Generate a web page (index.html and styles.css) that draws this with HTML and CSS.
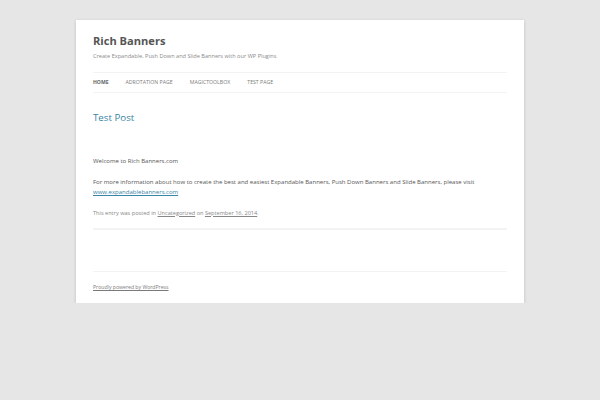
FILE: index.html
```html
<!DOCTYPE html>
<html lang="en">
<head>
<meta charset="utf-8">
<title>Rich Banners</title>
<link rel="stylesheet" href="styles.css">
</head>
<body>
<div class="site">
  <header class="site-header">
    <h1 class="site-title"><a href="#">Rich Banners</a></h1>
    <h2 class="site-description">Create Expandable, Push Down and Slide Banners with our WP Plugins</h2>
    <nav class="main-navigation">
      <ul class="nav-menu">
        <li class="current"><a href="#">Home</a></li>
        <li><a href="#">AdRotation Page</a></li>
        <li><a href="#">MagicToolbox</a></li>
        <li><a href="#">Test Page</a></li>
      </ul>
    </nav>
  </header>
  <main class="site-content">
    <article class="post">
      <header class="entry-header">
        <h1 class="entry-title"><a href="#">Test Post</a></h1>
      </header>
      <div class="entry-content">
        <p>Welcome to Rich Banners.com</p>
        <p>For more information about how to create the best and easiest Expandable Banners, Push Down Banners and Slide Banners, please visit <a href="#">www.expandablebanners.com</a></p>
      </div>
      <footer class="entry-meta">This entry was posted in <a href="#">Uncategorized</a> on <a href="#">September 16, 2014</a>.</footer>
    </article>
  </main>
  <footer class="site-footer">
    <a href="#">Proudly powered by WordPress</a>
  </footer>
</div>
</body>
</html>
```
FILE: styles.css
```css
html, body {
  margin: 0;
  padding: 0;
  background: #e6e6e6;
}
body {
  font-family: "Open Sans", "Liberation Sans", sans-serif;
  color: #555;
}
.site {
  width: 414px;
  margin: 20px auto 0;
  padding: 0 17px;
  background: #fff;
  box-shadow: 0 1px 3px rgba(100, 100, 100, 0.3);
}
.site-header {
  padding-top: 14.4px;
}
.site-title {
  margin: 0;
  font-size: 11.1px;
  line-height: 14px;
  font-weight: 700;
}
.site-title a {
  color: #555;
  text-decoration: none;
}
.site-description {
  margin: 2.9px 0 0;
  font-size: 5.6px;
  line-height: 10.3px;
  font-weight: 400;
  color: #8a8a8a;
}
.main-navigation {
  margin-top: 10.7px;
}
.nav-menu {
  list-style: none;
  margin: 0;
  padding: 0;
  display: flex;
  border-top: 1px solid #f3f3f3;
  border-bottom: 1px solid #f3f3f3;
}
.nav-menu li {
  margin-right: 17.1px;
  font-size: 5.2px;
  line-height: 19px;
  text-transform: uppercase;
  white-space: nowrap;
}
.nav-menu li a {
  color: #7c7c7c;
  text-decoration: none;
}
.nav-menu li.current a {
  color: #636363;
  font-weight: 700;
  font-size: 5.05px;
}
.site-content {
  margin-top: 18.6px;
}
.post {
  padding-bottom: 10px;
  border-bottom: 2px solid #f3f3f3;
  margin-bottom: 41px;
}
.entry-title {
  margin: 0;
  font-size: 9.74px;
  line-height: 11.7px;
  font-weight: 400;
}
.entry-title a {
  color: #3a84a6;
  text-decoration: none;
}
.entry-header {
  margin-bottom: 32.5px;
}
.entry-content p {
  margin: 0 0 10.3px;
  font-size: 6.02px;
  line-height: 10.3px;
  color: #575757;
}
.entry-content a {
  color: #3a84a6;
}
.entry-meta {
  font-size: 5.6px;
  line-height: 10.3px;
  color: #888;
}
.entry-meta a {
  color: #888;
}
.site-footer {
  border-top: 1px solid #f3f3f3;
  padding: 10.3px 0;
  font-size: 5.15px;
  line-height: 10.3px;
}
.site-footer a {
  color: #7a7a7a;
}
```
